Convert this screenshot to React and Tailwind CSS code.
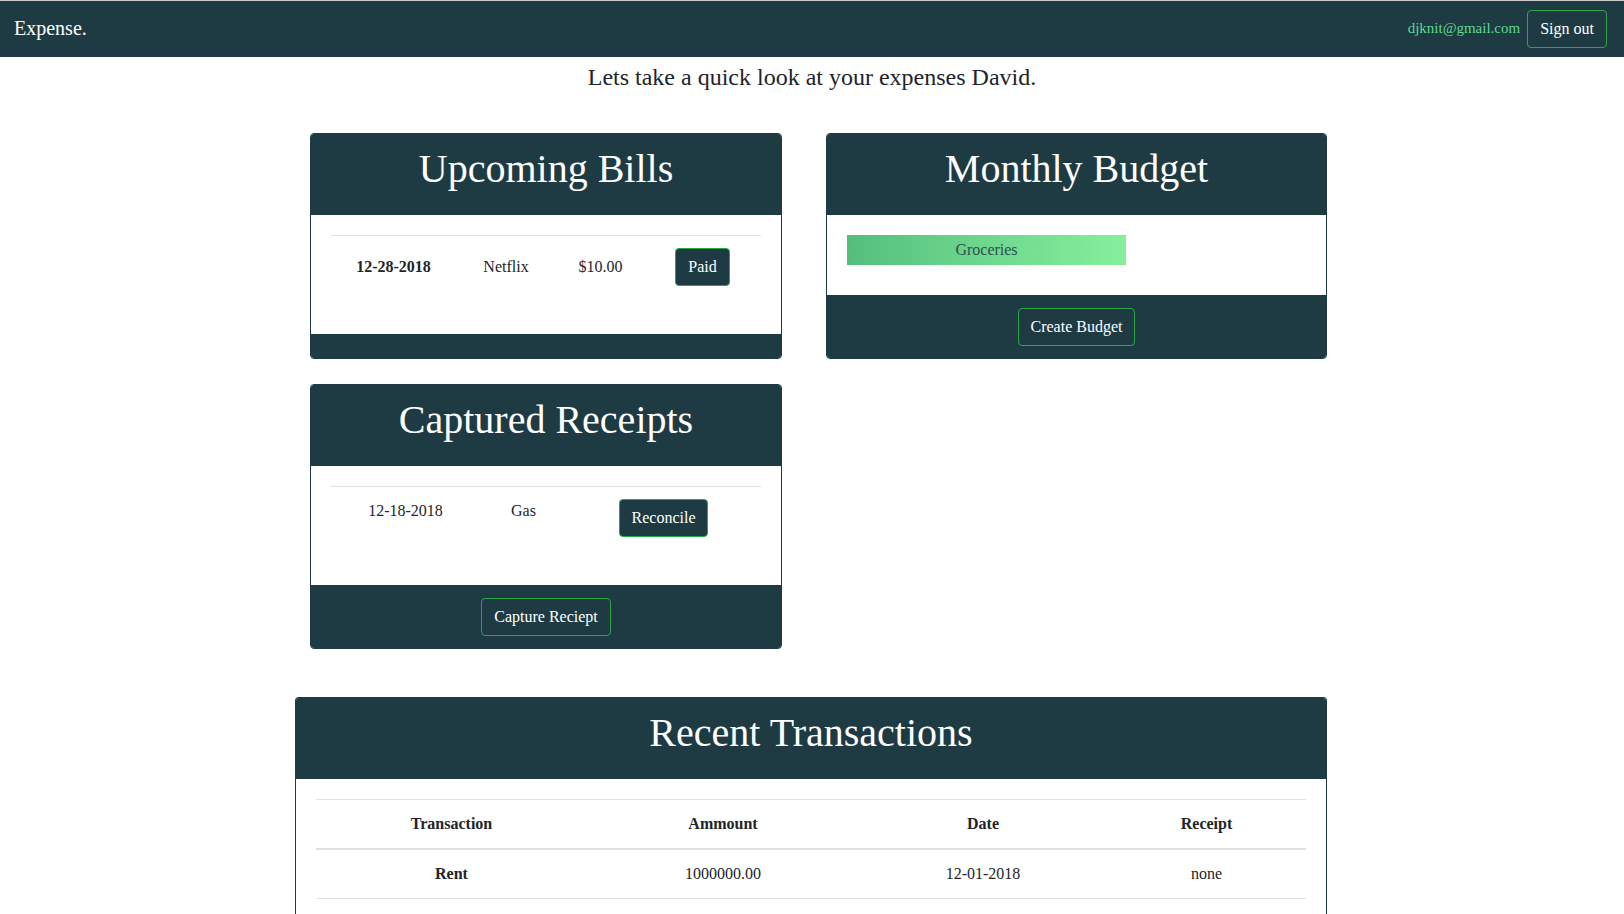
import React from "react";

const DARK = "bg-[#1e3b44]";

function Btn({ children, className = "" }) {
  return (
    <button
      className={`border border-[#28a745] rounded-[4px] px-[12px] py-[6px] text-[16px] leading-[24px] text-white ${className}`}
    >
      {children}
    </button>
  );
}

function CardHeader({ title }) {
  return (
    <div className={`${DARK} h-[81px] pt-[11px] text-center`}>
      <h1 className="text-[40px] leading-[48px] text-white font-normal">{title}</h1>
    </div>
  );
}

export default function App() {
  return (
    <div
      className="min-h-[914px] bg-white text-[#212529]"
      style={{ fontFamily: '"Liberation Serif", "Times New Roman", serif' }}
    >
      {/* Navbar */}
      <div className={`border-t border-[#c9c9c9] ${DARK} h-[57px] flex items-center justify-between pl-[14px] pr-[17px]`}>
        <div className="text-[20px] leading-[30px] text-white -mt-[2px]">Expense.</div>
        <div className="flex items-center gap-[7px]">
          <span className="text-[15px] leading-[24px] text-[#5fd88c] -mt-[2px]">djknit@gmail.com</span>
          <Btn className="bg-transparent">Sign out</Btn>
        </div>
      </div>

      {/* Greeting */}
      <h4 className="mt-[6px] text-center text-[24px] leading-[29px] text-[#212529]">
        Lets take a quick look at your expenses David.
      </h4>

      <div className="ml-[295px] w-[1032px] mt-[41px]">
        {/* Row 1 */}
        <div className="pl-[15px] flex gap-[44px] items-stretch">
          {/* Upcoming Bills */}
          <div className="w-[472px] border border-[#1e3b44] rounded-[4px] overflow-hidden flex flex-col">
            <CardHeader title="Upcoming Bills" />
            <div className="flex-1 bg-white px-[20px] pt-[20px]">
              <div className="border-t border-[#dee2e6] flex items-center py-[12px] text-[16px] leading-[24px]">
                <div className="w-[125px] text-center font-bold">12-28-2018</div>
                <div className="w-[100px] text-center">Netflix</div>
                <div className="w-[89px] text-center">$10.00</div>
                <div className="w-[115px] flex justify-center">
                  <Btn className={DARK}>Paid</Btn>
                </div>
              </div>
            </div>
            <div className={`${DARK} h-[24px]`} />
          </div>

          {/* Monthly Budget */}
          <div className="w-[501px] border border-[#1e3b44] rounded-[4px] overflow-hidden flex flex-col">
            <CardHeader title="Monthly Budget" />
            <div className="bg-white px-[20px] pt-[20px] pb-[30px]">
              <div
                className="w-[279px] h-[30px] flex items-center justify-center text-[16px] text-[#2f4f4f]"
                style={{ background: "linear-gradient(to right, #54bf7d, #87f09d)" }}
              >
                Groceries
              </div>
            </div>
            <div className={`${DARK} flex-1 flex justify-center pt-[13px] pb-[12px]`}>
              <Btn className="bg-transparent">Create Budget</Btn>
            </div>
          </div>
        </div>

        {/* Row 2 */}
        <div className="pl-[15px] mt-[25px]">
          <div className="w-[472px] border border-[#1e3b44] rounded-[4px] overflow-hidden flex flex-col">
            <CardHeader title="Captured Receipts" />
            <div className="bg-white px-[20px] pt-[20px] pb-[36px]">
              <div className="border-t border-[#dee2e6] flex items-start py-[12px] text-[16px] leading-[24px]">
                <div className="w-[149px] text-center">12-18-2018</div>
                <div className="w-[87px] text-center">Gas</div>
                <div className="w-[193px] flex justify-center">
                  <Btn className={DARK}>Reconcile</Btn>
                </div>
              </div>
            </div>
            <div className={`${DARK} flex justify-center pt-[13px] pb-[12px]`}>
              <Btn className="bg-transparent">Capture Reciept</Btn>
            </div>
          </div>
        </div>

        {/* Recent Transactions */}
        <div className="mt-[48px] w-[1032px] border-x border-t border-[#1e3b44] rounded-t-[4px] overflow-hidden">
          <CardHeader title="Recent Transactions" />
          <div className="bg-white px-[20px] pt-[20px] pb-[40px]">
            <div className="text-[16px] leading-[24px]">
              <div className="flex border-t border-[#dee2e6] border-b-2 font-bold py-[12px]">
                <div className="w-[271px] text-center">Transaction</div>
                <div className="w-[272px] text-center">Ammount</div>
                <div className="w-[248px] text-center">Date</div>
                <div className="w-[199px] text-center">Receipt</div>
              </div>
              <div className="flex border-b border-[#dee2e6] py-[12px]">
                <div className="w-[271px] text-center font-bold">Rent</div>
                <div className="w-[272px] text-center">1000000.00</div>
                <div className="w-[248px] text-center">12-01-2018</div>
                <div className="w-[199px] text-center">none</div>
              </div>
            </div>
          </div>
        </div>
      </div>
    </div>
  );
}
